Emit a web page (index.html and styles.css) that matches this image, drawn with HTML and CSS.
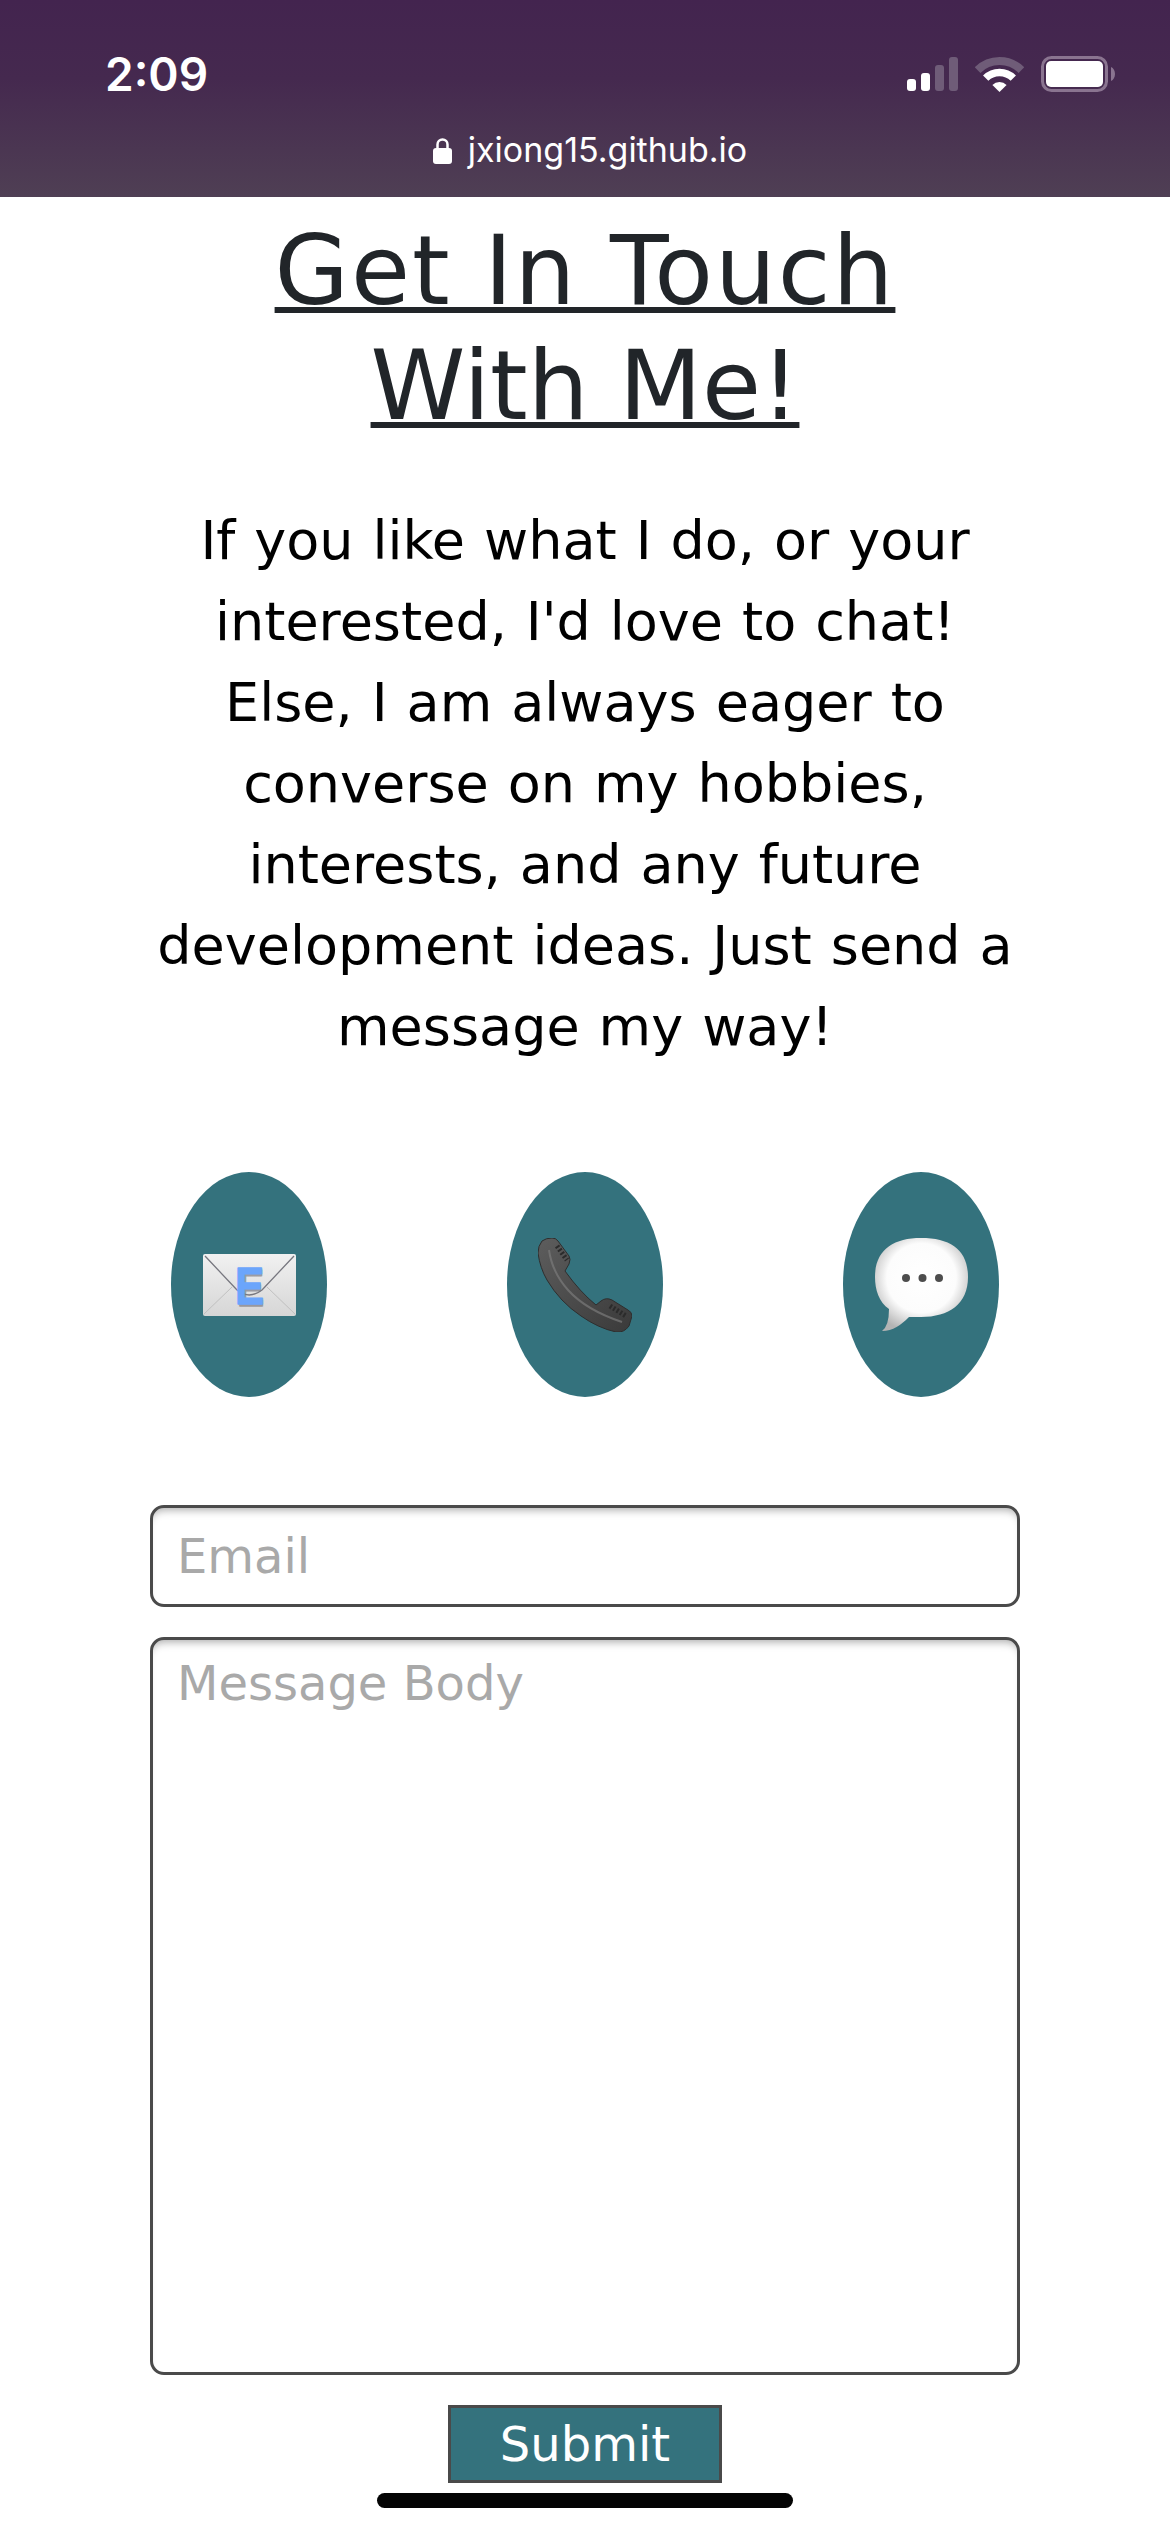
FILE: index.html
```html
<!DOCTYPE html>
<html lang="en">
<head>
  <meta charset="UTF-8">
  <meta name="viewport" content="width=device-width, initial-scale=1.0">
  <title>Get In Touch With Me!</title>
  <link rel="stylesheet" href="styles.css">
</head>
<body>
  <header class="browser-bar">
    <div class="status-row">
      <span class="clock">2:09</span>
      <div class="status-icons">
        <svg class="signal" width="51" height="34" viewBox="0 0 51 34">
          <rect x="0" y="22" width="9" height="12" rx="3" fill="#fff"/>
          <rect x="14" y="16" width="9" height="18" rx="3" fill="#fff"/>
          <rect x="28" y="8" width="9" height="26" rx="3" fill="#6f5c78"/>
          <rect x="42" y="0" width="9" height="34" rx="3" fill="#6f5c78"/>
        </svg>
        <svg class="wifi" width="49" height="36" viewBox="0 0 49 36">
          <path d="M2.6 14.1A31 31 0 0 1 46.4 14.1" fill="none" stroke="#6f5c78" stroke-width="8"/>
          <path d="M10.7 22.2A19.5 19.5 0 0 1 38.3 22.2" fill="none" stroke="#fff" stroke-width="7.5"/>
          <path d="M24.5 36L17.4 28.9A10 10 0 0 1 31.6 28.9Z" fill="#fff"/>
        </svg>
        <svg class="battery" width="74" height="36" viewBox="0 0 74 36">
          <rect x="1.5" y="1.5" width="64" height="33" rx="9" fill="none" stroke="#8a7490" stroke-width="3"/>
          <rect x="5" y="5" width="57" height="26" rx="5" fill="#fff"/>
          <path d="M70 11C72.500 12 74 15 74 18C74 21 72.500 24 70 25Z" fill="#8a7490"/>
        </svg>
      </div>
    </div>
    <div class="url-row">
      <svg class="lock" width="19" height="27" viewBox="0 0 19 27">
        <path d="M4.500 12V7.500a5 5 0 0 1 10 0V12" fill="none" stroke="#fff" stroke-width="2.500"/>
        <rect x="0" y="11" width="19" height="16" rx="3" fill="#fff"/>
      </svg>
      <span class="url">jxiong15.github.io</span>
    </div>
  </header>

  <main class="contact">
    <h1 class="contact-title"><span class="title-first">Get In Touch</span><br>With Me!</h1>
    <p class="contact-intro">If you like what I do, or your interested, I'd love to chat! Else, I am always eager to converse on my hobbies, interests, and any future development ideas. Just send a message my way!</p>

    <div class="contact-links">
      <a class="contact-link" href="#email">
        <svg width="93" height="62" viewBox="0 0 93 62">
          <defs>
            <linearGradient id="env" x1="0" y1="0" x2="0" y2="1">
              <stop offset="0" stop-color="#f1f1f1"/>
              <stop offset="1" stop-color="#d6d6d6"/>
            </linearGradient>
          </defs>
          <rect width="93" height="62" rx="2" fill="url(#env)"/>
          <path d="M1 60L29 33M92 60L64 33" stroke="#c0c0c0" stroke-width="1" fill="none"/>
          <path d="M2 2L34 36Q46 46 59 36L91 2" stroke="#77777f" stroke-width="1.300" fill="none"/>
          <text class="env-letter env-shadow" x="34" y="52" textLength="27" lengthAdjust="spacingAndGlyphs">E</text>
          <text class="env-letter" x="32" y="50" textLength="29" lengthAdjust="spacingAndGlyphs">E</text>
        </svg>
      </a>
      <a class="contact-link" href="#phone">
        <svg width="94" height="94" viewBox="0 0 94 94">
          <defs>
            <linearGradient id="handset" x1="0" y1="0" x2="1" y2="1">
              <stop offset="0" stop-color="#5d5d5d"/>
              <stop offset="1" stop-color="#3a3a3a"/>
            </linearGradient>
          </defs>
          <path d="M14 0Q8 0 4 3Q0 8 0 15Q2 30 9 42Q22 64 43 78Q60 90 78 94Q86 95 91 88L94 78Q94 74 90 72L74 62Q68 59 63 63L58 67Q42 54 27 33L31 26Q33 21 31 18L20 3Q18 0 14 0Z" fill="url(#handset)" stroke="#2e2e2e" stroke-width="1"/>
          <path d="M11 12Q14 34 30 52Q48 72 84 84" fill="none" stroke="#7a7a7a" stroke-width="2" opacity="0.7"/>
          <path d="M19 8L29 22M72 68L88 78" stroke="#2b2b2b" stroke-width="5" stroke-dasharray="2 2" fill="none"/>
        </svg>
      </a>
      <a class="contact-link" href="#message">
        <svg width="93" height="94" viewBox="0 0 93 94">
          <defs>
            <radialGradient id="bubble" cx="0.5" cy="0.43" r="0.6">
              <stop offset="0" stop-color="#fff"/>
              <stop offset="0.62" stop-color="#fcfcfc"/>
              <stop offset="1" stop-color="#b4b4b4"/>
            </radialGradient>
          </defs>
          <path d="M7 93Q14 88 14 71C4 64 0 52 0 39C0 12 18 0 46 0C76 0 93 12 93 39C93 66 74 79 46 79H34C26 87 18 93 7 93Z" fill="url(#bubble)"/>
          <circle cx="31" cy="40" r="4" fill="#4d4d4d"/>
          <circle cx="47.500" cy="40" r="4" fill="#4d4d4d"/>
          <circle cx="64" cy="40" r="4" fill="#4d4d4d"/>
        </svg>
      </a>
    </div>

    <form class="contact-form">
      <input class="field" type="text" placeholder="Email">
      <textarea class="field field-body" placeholder="Message Body"></textarea>
      <button class="submit" type="button">Submit</button>
    </form>
  </main>

  <div class="home-indicator"></div>
</body>
</html>
```

FILE: styles.css
```css
html, body {
  height: 2532px;
  overflow: hidden;
}

body {
  margin: 0;
  background-color: #fff;
  font-family: "DejaVu Sans", Verdana, sans-serif;
  color: #000;
}

/* Phone status bar and address */
.browser-bar {
  height: 197px;
  box-sizing: border-box;
  padding: 55px 55px 0 105px;
  background: linear-gradient(#43244f, #45294f 40%, #4f3f54);
  color: #fff;
  font-family: Inter, Roboto, sans-serif;
}

.status-row {
  display: flex;
  justify-content: space-between;
  align-items: center;
  height: 38px;
}

.clock {
  font-size: 46px;
  font-weight: 600;
  line-height: 38px;
}

.status-icons {
  display: flex;
  align-items: center;
  gap: 17px;
}

.url-row {
  display: flex;
  justify-content: center;
  align-items: center;
  gap: 16px;
  margin: 37px 0 0 -40px;
}

.url {
  font-size: 34px;
  line-height: 40px;
}

/* Page content */
.contact {
  display: flex;
  flex-direction: column;
  align-items: center;
  text-align: center;
}

.contact-title {
  margin: 17px 0 0;
  font-size: 96px;
  font-weight: 400;
  line-height: 115px;
  color: #212529;
  text-decoration: underline;
  text-decoration-thickness: 6px;
  text-underline-offset: 3px;
  text-decoration-skip-ink: none;
}

.title-first {
  letter-spacing: 2px;
}

.contact-intro {
  width: 870px;
  margin: 56px 0 0;
  font-size: 54px;
  line-height: 81px;
  word-spacing: 1.8px;
}

.contact-links {
  display: flex;
  justify-content: space-between;
  width: 828px;
  margin-top: 105px;
}

.contact-link {
  display: flex;
  justify-content: center;
  align-items: center;
  width: 156px;
  height: 225px;
  border-radius: 50%;
  background-color: #34727d;
  text-decoration: none;
}

.env-letter {
  font-family: "Liberation Sans", sans-serif;
  font-size: 52px;
  font-weight: 700;
  fill: #6ba5fb;
  stroke: #6ba5fb;
  stroke-width: 1.500;
  stroke-linejoin: round;
}

.env-shadow {
  fill: #7d7d85;
  stroke: #7d7d85;
  opacity: 0.7;
}

/* Form */
.contact-form {
  display: flex;
  flex-direction: column;
  align-items: center;
  gap: 30px;
  width: 870px;
  margin-top: 108px;
}

.field {
  display: block;
  width: 100%;
  height: 102px;
  box-sizing: border-box;
  margin: 0;
  padding: 0 24px;
  border: 3px solid #4a4a4a;
  border-radius: 14px;
  background-color: #fff;
  box-shadow: inset 0 8px 8px -6px #aaa;
  font-family: inherit;
  font-size: 48px;
  color: #000;
  outline: none;
  resize: none;
}

.field::placeholder {
  color: #a9a9a9;
  opacity: 1;
}

.field-body {
  height: 738px;
  padding-top: 13px;
  line-height: 60px;
}

.submit {
  width: 274px;
  height: 78px;
  padding: 0;
  border: 3px solid #4a4a4a;
  background-color: #34727d;
  font-family: inherit;
  font-size: 48px;
  color: #fff;
}

.home-indicator {
  position: absolute;
  left: 377px;
  top: 2493px;
  width: 416px;
  height: 15px;
  border-radius: 8px;
  background-color: #040404;
}
```
